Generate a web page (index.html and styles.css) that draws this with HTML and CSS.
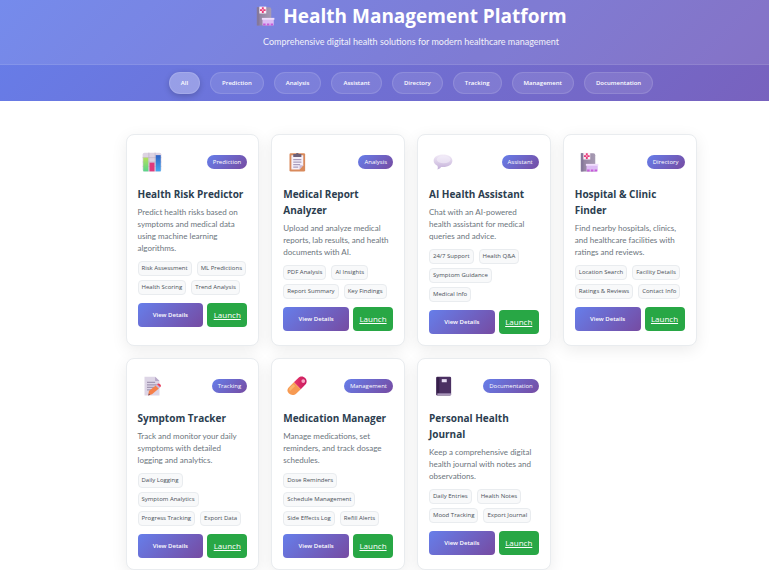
FILE: index.html
```html
<!DOCTYPE html>
<html lang="en">
<head>
  <meta charset="UTF-8">
  <meta name="viewport" content="width=device-width, initial-scale=1">
  <title>Health Management Platform</title>
  <link rel="stylesheet" href="styles.css">
</head>
<body>

<svg class="sprite" aria-hidden="true">
  <defs>
    <linearGradient id="gray" x1="0" x2="1"><stop offset="0" stop-color="#8f7f9e"/><stop offset="1" stop-color="#a79bb3"/></linearGradient>
    <linearGradient id="green" x1="0" y1="0" x2="0" y2="1"><stop offset="0" stop-color="#b5e05c"/><stop offset="1" stop-color="#58d68a"/></linearGradient>
    <linearGradient id="blue" x1="0" y1="0" x2="0" y2="1"><stop offset="0" stop-color="#2f62c4"/><stop offset="1" stop-color="#45a8f0"/></linearGradient>
    <linearGradient id="bubble" x1="0" y1="0" x2="0" y2="1"><stop offset="0" stop-color="#f3ecf8"/><stop offset="1" stop-color="#c3afd8"/></linearGradient>
    <linearGradient id="pillTop" x1="0" x2="1"><stop offset="0" stop-color="#e8386a"/><stop offset="1" stop-color="#c8185e"/></linearGradient>
  </defs>
  <symbol id="hospital" viewBox="0 0 32 32">
    <path fill="url(#gray)" d="M3 2h20a3 3 0 0 1 3 3v26H3z"/>
    <path fill="#85789a" d="M3 2h4v29H3z"/>
    <path fill="#fbeef6" d="M7 1h11v11H7z"/>
    <path fill="#e83a7a" d="M11 2h3v3h3v3h-3v3h-3V8H8V5h3z"/>
    <circle cx="12.500" cy="6.500" r="1.200" fill="#fbeef6"/>
    <path fill="#dcbcf4" d="M12 20h18v11H12z"/>
    <path fill="#f0defc" d="M11 19h20v3H11z"/>
    <path fill="#c85ad8" d="M13 28h4v3h-4zM19 28h4v3h-4zM25 28h4v3h-4z"/>
  </symbol>
</svg>

<header class="hero">
  <div class="hero-top">
    <h1>
      <svg class="logo" aria-hidden="true"><use href="#hospital"/></svg>
      Health Management Platform
    </h1>
    <p>Comprehensive digital health solutions for modern healthcare management</p>
  </div>
  <nav class="filters">
    <button class="filter active">All</button>
    <button class="filter">Prediction</button>
    <button class="filter">Analysis</button>
    <button class="filter">Assistant</button>
    <button class="filter">Directory</button>
    <button class="filter">Tracking</button>
    <button class="filter">Management</button>
    <button class="filter">Documentation</button>
  </nav>
</header>

<main>
  <div class="grid">

    <article class="card">
      <div class="card-head">
        <svg class="icon" viewBox="0 0 32 32" aria-hidden="true">
          <rect x="1" y="1" width="30" height="30" rx="3" fill="#ddd3e2"/>
          <path stroke="#bdb0c6" d="M1 9h30M1 16h30M1 23h30M11 1v30M21 1v30"/>
          <rect x="2" y="9" width="8" height="22" fill="url(#green)"/>
          <rect x="12" y="17" width="8" height="14" fill="#e0387c"/>
          <rect x="22" y="5" width="8" height="26" fill="url(#blue)"/>
        </svg>
        <span class="badge">Prediction</span>
      </div>
      <h2>Health Risk Predictor</h2>
      <p>Predict health risks based on symptoms and medical data using machine learning algorithms.</p>
      <div class="tags">
        <span>Risk Assessment</span>
        <span>ML Predictions</span>
        <span>Health Scoring</span>
        <span>Trend Analysis</span>
      </div>
      <div class="actions">
        <button class="details">View Details</button>
        <a class="launch" href="#">Launch</a>
      </div>
    </article>

    <article class="card">
      <div class="card-head">
        <svg class="icon" viewBox="0 0 32 32" aria-hidden="true">
          <rect x="4" y="2" width="25" height="29" rx="2" fill="#d98a5c"/>
          <path fill="#f5f0fa" d="M7 5h19v16l-6 7H7z"/>
          <path fill="#c9b9d8" d="M26 21l-6 7v-7z"/>
          <path fill="#6d6078" d="M10 3h4a3 3 0 0 1 5 0h4v5H10z"/>
          <path stroke="#a99cbc" stroke-width="2" d="M10 12h13M10 16h13M10 20h11M10 24h8"/>
        </svg>
        <span class="badge">Analysis</span>
      </div>
      <h2>Medical Report Analyzer</h2>
      <p>Upload and analyze medical reports, lab results, and health documents with AI.</p>
      <div class="tags">
        <span>PDF Analysis</span>
        <span>AI Insights</span>
        <span>Report Summary</span>
        <span>Key Findings</span>
      </div>
      <div class="actions">
        <button class="details">View Details</button>
        <a class="launch" href="#">Launch</a>
      </div>
    </article>

    <article class="card">
      <div class="card-head">
        <svg class="icon" viewBox="0 0 32 32" aria-hidden="true">
          <path fill="url(#bubble)" d="M16 4c9 0 15 4 15 10s-6 10-15 10h-3c-1 2-3 3-6 4 1-2 1-4 0-6-4-2-6-5-6-8C1 8 7 4 16 4z"/>
          <ellipse cx="17" cy="12" rx="11" ry="6" fill="#f4eefa" opacity=".6"/>
        </svg>
        <span class="badge">Assistant</span>
      </div>
      <h2>AI Health Assistant</h2>
      <p>Chat with an AI-powered health assistant for medical queries and advice.</p>
      <div class="tags">
        <span>24/7 Support</span>
        <span>Health Q&amp;A</span>
        <span>Symptom Guidance</span>
        <span>Medical Info</span>
      </div>
      <div class="actions">
        <button class="details">View Details</button>
        <a class="launch" href="#">Launch</a>
      </div>
    </article>

    <article class="card">
      <div class="card-head">
        <svg class="icon" aria-hidden="true"><use href="#hospital"/></svg>
        <span class="badge">Directory</span>
      </div>
      <h2>Hospital &amp; Clinic Finder</h2>
      <p>Find nearby hospitals, clinics, and healthcare facilities with ratings and reviews.</p>
      <div class="tags">
        <span>Location Search</span>
        <span>Facility Details</span>
        <span>Ratings &amp; Reviews</span>
        <span>Contact Info</span>
      </div>
      <div class="actions">
        <button class="details">View Details</button>
        <a class="launch" href="#">Launch</a>
      </div>
    </article>

    <article class="card">
      <div class="card-head">
        <svg class="icon" viewBox="0 0 32 32" aria-hidden="true">
          <path fill="#ddd5e6" d="M4 1h17l7 7v23H4z"/>
          <path fill="#b7a8c8" d="M21 1l7 7h-7z"/>
          <path stroke="#a397b2" stroke-width="2" d="M8 10h13M8 14h16M8 18h12M8 22h8"/>
          <path fill="#f5804a" d="M11 24l11-9 5 5-11 9-6 2z"/>
          <path fill="#c9b9d8" d="M22 15l2-2 5 5-2 2z"/>
          <path fill="#e8405e" d="M24 13c3-3 9 2 5 5z"/>
          <path fill="#5b4a68" d="M10 31l1-3 2 2z"/>
        </svg>
        <span class="badge">Tracking</span>
      </div>
      <h2>Symptom Tracker</h2>
      <p>Track and monitor your daily symptoms with detailed logging and analytics.</p>
      <div class="tags">
        <span>Daily Logging</span>
        <span>Symptom Analytics</span>
        <span>Progress Tracking</span>
        <span>Export Data</span>
      </div>
      <div class="actions">
        <button class="details">View Details</button>
        <a class="launch" href="#">Launch</a>
      </div>
    </article>

    <article class="card">
      <div class="card-head">
        <svg class="icon" viewBox="0 0 32 32" aria-hidden="true">
          <path fill="url(#pillTop)" d="M11 10l7-7c8-7 18 4 11 11l-7 7z"/>
          <path fill="#f79a52" d="M11 10l11 11-7 7C7 35-4 25 3 18z"/>
          <path fill="#fbb56c" d="M10 13l3 3-8 8c-2-1-2-4 0-6z"/>
          <circle cx="26" cy="8" r="3" fill="#f7a5c4"/>
        </svg>
        <span class="badge">Management</span>
      </div>
      <h2>Medication Manager</h2>
      <p>Manage medications, set reminders, and track dosage schedules.</p>
      <div class="tags">
        <span>Dose Reminders</span>
        <span>Schedule Management</span>
        <span>Side Effects Log</span>
        <span>Refill Alerts</span>
      </div>
      <div class="actions">
        <button class="details">View Details</button>
        <a class="launch" href="#">Launch</a>
      </div>
    </article>

    <article class="card">
      <div class="card-head">
        <svg class="icon" viewBox="0 0 32 32" aria-hidden="true">
          <rect x="5" y="1" width="24" height="30" rx="2" fill="#4b3062"/>
          <path fill="#36204a" d="M6 2h4v26H6z"/>
          <path fill="#c8b8d8" d="M7 28h22v2H7z"/>
          <path fill="#e6dcf2" d="M14 5h8v5h-8z"/>
        </svg>
        <span class="badge">Documentation</span>
      </div>
      <h2>Personal Health Journal</h2>
      <p>Keep a comprehensive digital health journal with notes and observations.</p>
      <div class="tags">
        <span>Daily Entries</span>
        <span>Health Notes</span>
        <span>Mood Tracking</span>
        <span>Export Journal</span>
      </div>
      <div class="actions">
        <button class="details">View Details</button>
        <a class="launch" href="#">Launch</a>
      </div>
    </article>

  </div>
</main>

</body>
</html>
```
FILE: styles.css
```css
* {
  box-sizing: border-box;
  margin: 0;
  padding: 0;
}
body {
  font-family: 'Open Sans', 'Noto Sans', sans-serif;
  background: white;
  color: #2c3e50;
}
p {
  font-family: Lato, 'Open Sans', sans-serif;
}
button {
  font-family: inherit;
  border: none;
  cursor: pointer;
}
.sprite {
  position: absolute;
  width: 0;
  height: 0;
}

/* Header */
.hero {
  background: linear-gradient(135deg, #667eea 0%, #7862be 100%);
  color: white;
}
.hero-top {
  background: rgba(255, 255, 255, 0.1);
  border-bottom: 1px solid rgba(255, 255, 255, 0.1);
  padding: 2px 0 16px 53px;
  text-align: center;
}
h1 {
  display: flex;
  justify-content: center;
  align-items: center;
  gap: 8px;
  font-size: 19px;
  line-height: 28px;
  font-weight: 700;
}
.logo {
  width: 20px;
  height: 20px;
}
.hero-top p {
  font-size: 9px;
  line-height: 12px;
  margin-top: 6px;
  opacity: 0.9;
}
.filters {
  display: flex;
  justify-content: center;
  gap: 10px;
  padding: 7px 0 7px 53px;
}
.filter {
  height: 22px;
  padding: 0 11px;
  border: 1px solid rgba(255, 255, 255, 0.12);
  border-radius: 11px;
  background: rgba(255, 255, 255, 0.1);
  color: white;
  font-size: 6px;
  font-weight: 600;
}
.filter.active {
  background: rgba(255, 255, 255, 0.3);
  box-shadow: 0 2px 6px rgba(0, 0, 0, 0.2);
}

/* Cards */
main {
  padding: 33px 0 0 53px;
}
.grid {
  display: grid;
  grid-template-columns: repeat(4, 1fr);
  gap: 12px;
  max-width: 571px;
  margin: 0 auto;
}
.card {
  background: white;
  border: 1px solid #e9ecef;
  border-radius: 8px;
  padding: 11px;
  box-shadow: 0 4px 16px rgba(0, 0, 0, 0.08);
}
.card-head {
  display: flex;
  justify-content: space-between;
  align-items: center;
  height: 32px;
  margin-bottom: 8px;
}
.icon {
  width: 20px;
  height: 20px;
  margin-left: 4px;
}
.badge {
  background: linear-gradient(135deg, #667eea 0%, #764ba2 100%);
  color: white;
  font-size: 6px;
  line-height: 14px;
  padding: 0 6px;
  border-radius: 7px;
}
h2 {
  font-size: 10px;
  line-height: 16px;
  font-weight: 700;
  margin-bottom: 4px;
}
.card p {
  color: #6c757d;
  font-size: 8px;
  line-height: 12px;
  margin-bottom: 7px;
}
.tags {
  display: flex;
  flex-wrap: wrap;
  gap: 4px 5px;
  margin-bottom: 8px;
}
.tags span {
  background: #f8f9fa;
  border: 1px solid #e9ecef;
  border-radius: 4px;
  color: #495057;
  font-size: 6px;
  line-height: 13px;
  padding: 0 3px;
}
.actions {
  display: flex;
  gap: 4px;
}
.details {
  flex: 1;
  height: 24px;
  background: linear-gradient(135deg, #667eea 0%, #764ba2 100%);
  border-radius: 4px;
  color: white;
  font-size: 6px;
  font-weight: 600;
}
.launch {
  width: 40px;
  background: #28a745;
  border-radius: 4px;
  color: white;
  font-size: 8px;
  line-height: 24px;
  text-align: center;
}
```
